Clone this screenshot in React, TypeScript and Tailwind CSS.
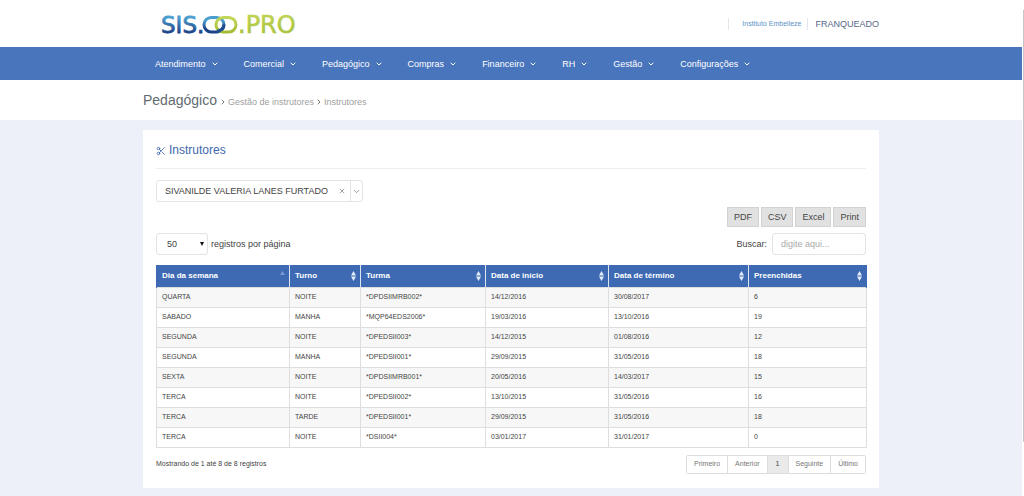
import React, { useState } from "react";
import { ChevronDown, ChevronRight, Scissors, X } from "lucide-react";

const menu = ["Atendimento", "Comercial", "Pedagógico", "Compras", "Financeiro", "RH", "Gestão", "Configurações"];

const columns = [
  { label: "Dia da semana", width: "w-[133px]" },
  { label: "Turno", width: "w-[71px]" },
  { label: "Turma", width: "w-[125px]" },
  { label: "Data de início", width: "w-[123px]" },
  { label: "Data de término", width: "w-[140px]" },
  { label: "Preenchidas", width: "w-[118px]" },
];

const rows = [
  ["QUARTA", "NOITE", "*DPDSIIMRB002*", "14/12/2016", "30/08/2017", "6"],
  ["SABADO", "MANHA", "*MQP64EDS2006*", "19/03/2016", "13/10/2016", "19"],
  ["SEGUNDA", "NOITE", "*DPEDSII003*", "14/12/2015", "01/08/2016", "12"],
  ["SEGUNDA", "MANHA", "*DPEDSII001*", "29/09/2015", "31/05/2016", "18"],
  ["SEXTA", "NOITE", "*DPDSIIMRB001*", "20/05/2016", "14/03/2017", "15"],
  ["TERCA", "NOITE", "*DPEDSII002*", "13/10/2015", "31/05/2016", "16"],
  ["TERCA", "TARDE", "*DPEDSII001*", "29/09/2015", "31/05/2016", "18"],
  ["TERCA", "NOITE", "*DSII004*", "03/01/2017", "31/01/2017", "0"],
];

const pages = ["Primeiro", "Anterior", "1", "Seguinte", "Último"];

const Logo = () => (
  <svg width="142" height="32" viewBox="0 0 142 32" className="overflow-visible" role="img" aria-label="SIS.OO.PRO">
    <defs>
      <linearGradient id="blue" x1="0" y1="0" x2="0" y2="1">
        <stop offset="0.2" stopColor="#4a9fd0" />
        <stop offset="0.8" stopColor="#1c4287" />
      </linearGradient>
      <linearGradient id="green" x1="0" y1="0" x2="0" y2="1">
        <stop offset="0" stopColor="#c3d65a" />
        <stop offset="1" stopColor="#a3bd35" />
      </linearGradient>
    </defs>
    <text x="0" y="23" fontSize="23" fontFamily="DejaVu Sans" fill="url(#blue)" stroke="url(#blue)" strokeWidth="0.8">SIS.</text>
    <rect x="43" y="7.5" width="20" height="14.5" rx="7.2" fill="none" stroke="url(#blue)" strokeWidth="3" />
    <rect x="55" y="7.5" width="20" height="14.5" rx="7.2" fill="none" stroke="url(#green)" strokeWidth="3" />
    <path d="M56 21.5Q62.5 20 63 14.5" fill="none" stroke="#1f4d92" strokeWidth="3" />
    <text x="77" y="23" fontSize="24" fontFamily="DejaVu Sans" fill="url(#green)" stroke="url(#green)" strokeWidth="0.6">.PRO</text>
  </svg>
);

const SortIcon = ({ active }: { active: boolean }) => (
  <svg width="5" height="10" viewBox="0 0 5 10" aria-hidden="true">
    {active ? (
      <path d="M0 4L2.5 0L5 4Z" fill="#7d9bd2" />
    ) : (
      <path d="M0 4.5L2.5 0L5 4.5ZM0 5.5L2.5 10L5 5.5Z" fill="#e2ecfa" />
    )}
  </svg>
);

const App: React.FC = () => {
  const [instructor, setInstructor] = useState("SIVANILDE VALERIA LANES FURTADO");
  const [search, setSearch] = useState("");

  const filtered = rows.filter((row) => row.join(" ").toLowerCase().includes(search.toLowerCase()));

  return (
    <div className="flex min-h-screen bg-white font-['Liberation_Sans',Arial,sans-serif] text-[9px] leading-3 text-[#444]">
      <div className="flex-1 min-w-0 flex flex-col bg-[#edf0f8]">
        <header className="bg-white">
          <div className="max-w-[736px] mx-auto h-[47px] flex items-center justify-between">
            <a href="#" className="ml-[18px] mt-1">
              <Logo />
            </a>
            <div className="flex items-center">
              <a href="#" className="h-3 pl-[13px] pr-[6px] border-l border-gray-200 text-[7px] text-[#5b92c6]">
                Instituto Embelleze
              </a>
              <span className="h-3 pl-[7px] border-l border-gray-200 text-[#57668a]">FRANQUEADO</span>
            </div>
          </div>
        </header>

        <nav className="bg-[#4975bd]">
          <ul className="max-w-[736px] mx-auto h-[33px] pl-3 flex items-center gap-[25px] text-white">
            {menu.map((item) => (
              <li key={item}>
                <button type="button" className="flex items-center gap-[5px]">
                  {item}
                  <ChevronDown size={8} strokeWidth={3} />
                </button>
              </li>
            ))}
          </ul>
        </nav>

        <div className="bg-white">
          <div className="max-w-[736px] mx-auto h-10 flex items-center gap-[2px] text-[#a0a0a0]">
            <h1 className="text-[14px] leading-4 text-[#5f6b70]">Pedagógico</h1>
            <div className="flex items-center gap-px mt-1">
              <ChevronRight size={8} strokeWidth={3} className="text-[#777]" />
              <a href="#">Gestão de instrutores</a>
              <ChevronRight size={8} strokeWidth={3} className="text-[#777]" />
              <a href="#">Instrutores</a>
            </div>
          </div>
        </div>

        <main className="w-full max-w-[736px] mx-auto my-[10px] px-[13px] pt-[13px] pb-[14px] bg-white">
          <h2 className="flex items-center gap-[3px] pb-[10px] border-b border-[#eee] text-[12px] leading-[15px] text-[#3f68ad]">
            <Scissors size={10} strokeWidth={2} />
            Instrutores
          </h2>

          <div className="mt-[11px] w-[207px] h-[22px] flex items-center border border-[#e3e3e3] rounded-[3px]">
            <input
              type="text"
              aria-label="Instrutor"
              className="flex-1 min-w-0 pl-2 focus:outline-none"
              value={instructor}
              onChange={(e) => setInstructor(e.target.value)}
            />
            <button type="button" aria-label="Limpar" className="px-1 text-[#777]" onClick={() => setInstructor("")}>
              <X size={8} strokeWidth={2} />
            </button>
            <button type="button" aria-label="Abrir lista" className="h-full px-[1px] border-l border-[#e3e3e3] text-[#777]">
              <ChevronDown size={9} strokeWidth={2} />
            </button>
          </div>

          <div className="mt-[5px] flex justify-end gap-[2px]">
            {["PDF", "CSV", "Excel", "Print"].map((label) => (
              <button key={label} type="button" className="h-5 px-[6px] border border-[#d2d2d2] bg-[#e1e1e1] hover:bg-gray-300">
                {label}
              </button>
            ))}
          </div>

          <div className="mt-[6px] flex items-center justify-between">
            <label className="flex items-center gap-[3px]">
              <span className="relative">
                <select className="block w-[52px] h-[22px] pl-[10px] appearance-none bg-white border border-[#e3e3e3] rounded-[3px]" defaultValue="50">
                  <option>10</option>
                  <option>25</option>
                  <option>50</option>
                  <option>100</option>
                </select>
                <svg className="absolute right-1 top-[9px] pointer-events-none" width="4" height="4" viewBox="0 0 4 4" aria-hidden="true">
                  <path d="M0 0H4L2 4Z" fill="#111" />
                </svg>
              </span>
              registros por página
            </label>
            <label className="flex items-center gap-[5px]">
              Buscar:
              <input
                type="text"
                placeholder="digite aqui..."
                className="w-[94px] h-[22px] px-2 border border-[#e3e3e3] rounded-[3px] placeholder:text-[#aaa] focus:outline-none"
                value={search}
                onChange={(e) => setSearch(e.target.value)}
              />
            </label>
          </div>

          <table className="mt-[10px] w-full table-fixed border-collapse text-[7px] leading-[10px]">
            <thead>
              <tr className="h-[22px] bg-[#3d6ab3] text-[8px] text-white">
                {columns.map((col, i) => (
                  <th key={col.label} scope="col" className={`${col.width} pl-[5px] pr-1 border-x border-[#dfe5ef] first:border-l-[#3d6ab3] last:border-r-[#3d6ab3] text-left font-bold`}>
                    <div className="flex items-center justify-between">
                      {col.label}
                      <SortIcon active={i === 0} />
                    </div>
                  </th>
                ))}
              </tr>
            </thead>
            <tbody>
              {filtered.map((row, i) => (
                <tr key={i} className="h-5 odd:bg-[#f7f7f7]">
                  {row.map((cell, j) => (
                    <td key={j} className="pl-[5px] border border-[#dedede]">
                      {cell}
                    </td>
                  ))}
                </tr>
              ))}
            </tbody>
          </table>

          <div className="mt-[7px] flex items-start justify-between text-[7px] leading-[10px]">
            <p className="mt-1">Mostrando de 1 até 8 de 8 registros</p>
            <div className="flex border border-[#ddd] rounded-[2px] divide-x divide-[#ddd] text-[#777]">
              {pages.map((page) => (
                <button key={page} type="button" className={`h-[17px] ${page === "1" ? "px-2 bg-[#eaeaea] font-bold" : "px-[7px] bg-white"}`}>
                  {page}
                </button>
              ))}
            </div>
          </div>
        </main>
      </div>

      <div className="w-[2px] pt-[10px] pb-14 flex justify-end">
        <div className="w-px bg-[#c4c6cc]" />
      </div>
    </div>
  );
};

export default App;
